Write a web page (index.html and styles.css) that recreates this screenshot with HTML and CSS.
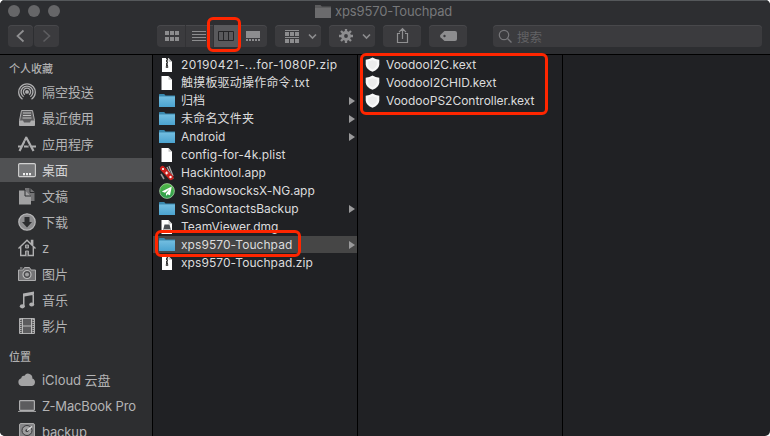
FILE: index.html
```html
<!DOCTYPE html>
<html lang="zh-CN">
<head>
<meta charset="utf-8">
<title>xps9570-Touchpad</title>
<link rel="stylesheet" href="styles.css">
</head>
<body>
<svg class="defs" width="0" height="0">
  <defs>
    <linearGradient id="blue" x1="0" y1="0" x2="0" y2="1"><stop offset="0" stop-color="#73bee0"/><stop offset="1" stop-color="#4ba3d0"/></linearGradient>
    <linearGradient id="green" x1="0" y1="0" x2="0" y2="1"><stop offset="0" stop-color="#52b947"/><stop offset="1" stop-color="#2a9b4d"/></linearGradient>
    <symbol id="folder" viewBox="0 0 16 16"><path d="M0 1.700Q0 1 .7 1h4.500l1.300 1.400H16V5H0z" fill="#3988ae"/><path d="M0 3.500h16V14H0z" fill="url(#blue)"/></symbol>
    <symbol id="doc" viewBox="0 0 16 16"><path d="M2.500 1h7L13 4.700V15H2.500z" fill="#fff"/><path d="M9.500 1v3.700H13z" fill="#c9c9c9"/></symbol>
    <symbol id="zip" viewBox="0 0 16 16"><path d="M3 1h6.500L13 4.700V15H3z" fill="#fff"/><path d="M9.500 1v3.700H13z" fill="#bbb"/><path d="M7 1h2v9H7z" fill="#333"/><path d="M7 2.500h1M8 4h1M7 5.500h1M8 7h1" stroke="#aaa"/><path d="M6.800 9h2.400v2H6.800z" fill="#555"/></symbol>
    <symbol id="shield" viewBox="0 0 16 16"><path d="M8.500 .5Q11.500 2.600 15.300 2.800v5Q14.800 12.300 8.500 14.800 2.200 12.300 1.700 7.800v-5Q5.500 2.600 8.500 .5z" fill="#f8f8f8"/><path d="M8.500 3Q10.500 4.300 12.800 4.500v3.300Q12.200 10.800 8.500 12.500 4.800 10.800 4.200 7.800V4.500Q6.500 4.300 8.500 3z" fill="#ececec"/></symbol>
  </defs>
</svg>
<div class="window">
  <header class="header">
    <div class="titlebar">
      <div class="lights"><i></i><i></i><i></i></div>
      <svg class="title-icon" width="16" height="14" viewBox="0 0 16 14"><path d="M0 1h5.500l1.300 1.500H16V14H0z" fill="#5b5b5d"/><path d="M0 4h16v10H0z" fill="#6b6b6d"/></svg>
      <span class="title">xps9570-Touchpad</span>
    </div>
    <div class="toolbar">
      <div class="btn back"><svg width="25" height="22" viewBox="0 0 25 22"><path d="M15.500 5.500 9.500 11l6 5.500" fill="none" stroke="#909092" stroke-width="1.700"/></svg></div>
      <div class="btn forward"><svg width="25" height="22" viewBox="0 0 25 22"><path d="m9.500 5.500 6 5.500-6 5.500" fill="none" stroke="#5d5d60" stroke-width="1.600"/></svg></div>
      <div class="btn views">
        <div class="seg"><svg width="28" height="22" viewBox="0 0 28 22" fill="#8d8d8f"><path d="M8 6h4v4H8zm5 0h4v4h-4zm5 0h4v4h-4zM8 12h4v4H8zm5 0h4v4h-4zm5 0h4v4h-4z"/></svg></div>
        <div class="seg"><svg width="28" height="22" viewBox="0 0 28 22"><path d="M7 6.500h14M7 9.500h14M7 12.500h14M7 15.500h14" stroke="#8d8d8f"/></svg></div>
        <div class="seg active"><svg width="26" height="22" viewBox="0 0 26 22"><path d="M5.500 6.500h15v9h-15zM10.500 6.500v9M15.500 6.500v9" fill="none" stroke="#242427"/></svg></div>
        <div class="seg"><svg width="28" height="22" viewBox="0 0 28 22" fill="#8d8d8f"><path d="M7 6h14v7H7zM7 14h2v2H7zm3 0h2v2h-2zm3 0h2v2h-2zm3 0h2v2h-2zm3 0h2v2h-2z"/></svg></div>
      </div>
      <div class="btn group"><svg width="46" height="22" viewBox="0 0 46 22" fill="#8d8d8f"><path d="M10 5h14v1H10zM10 7h4v4h-4zm5 0h4v4h-4zm5 0h4v4h-4zM10 12h14v1H10zM10 14h4v4h-4zm5 0h4v4h-4zm5 0h4v4h-4z"/><path d="m34 9.500 3.500 3.500L41 9.500" fill="none" stroke="#8d8d8f" stroke-width="1.600"/></svg></div>
      <div class="btn gear"><svg width="46" height="22" viewBox="0 0 46 22"><g stroke="#8d8d8f" fill="none"><path d="M17 4v3M17 15v3M10 11h3M21 11h3M12 6l2.200 2.200M19.800 13.800 22 16M12 16l2.200-2.200M19.800 8.200 22 6" stroke-width="2.300"/><circle cx="17" cy="11" r="3.400" stroke-width="3"/><path d="m34 9.500 3.500 3.500L41 9.500" stroke-width="1.600"/></g></svg></div>
      <div class="btn share"><svg width="38" height="22" viewBox="0 0 38 22"><path d="M17 8.500h-2.500v9h10v-9H22M19.500 14V4M16 7.200l3.500-3.500L23 7.200" fill="none" stroke="#909092" stroke-width="1.200"/></svg></div>
      <div class="btn tag"><svg width="38" height="22" viewBox="0 0 38 22"><path d="M15.500 6H26q2 0 2 2v6q0 2-2 2H15.500l-4-3.800q-1-1.200 0-2.400z" fill="#8d8d8f"/><circle cx="15.500" cy="11" r="1.200" fill="#3b3b3e"/></svg></div>
      <div class="btn search"><svg width="15" height="15" viewBox="0 0 15 15"><circle cx="6" cy="6" r="4.700" fill="none" stroke="#77777a" stroke-width="1.200"/><path d="m9.500 9.500 4 4" stroke="#77777a" stroke-width="1.300"/></svg><span>搜索</span></div>
    </div>
  </header>
  <div class="body">
    <aside class="sidebar">
      <h2>个人收藏</h2>
      <ul>
        <li><svg width="18" height="18" viewBox="0 0 18 18" fill="none" stroke="#adadae" stroke-width="1.300"><path d="M4.500 16.200a8.300 8.300 0 1 1 9 0M5.600 13.800a5.900 5.900 0 1 1 6.800 0M6.900 11.700a3.600 3.600 0 1 1 4.200 0"/><circle cx="9" cy="9" r="1.300" fill="#adadae"/><path d="m9 10-3 7h6z" fill="#2d2e30" stroke="none"/></svg><span>隔空投送</span></li>
        <li><svg width="18" height="18" viewBox="0 0 18 18"><path d="M3.500 1.500h11l2 10v5h-15v-5z" fill="#5c5c5e" stroke="#adadae"/><path d="M5 4h8M5 6.500h8M4.500 9h9" stroke="#c0c0c0" stroke-width="1.100"/><path d="M1.500 11.500H5l1 2h6l1-2h3.500v5h-15z" fill="#adadae"/></svg><span>最近使用</span></li>
        <li><svg width="18" height="18" viewBox="0 0 18 18" fill="none" stroke="#adadae"><path d="m8.500 2-7 14M8 2l7.500 14" stroke-width="2.200"/><path d="M0 11.500h3.500M6 11.500h5M14 11.500h4" stroke-width="1.800"/><path d="m7 5.500 4.500 8" stroke="#2d2e30" stroke-width=".6"/></svg><span>应用程序</span></li>
        <li class="selected"><svg width="18" height="18" viewBox="0 0 18 18"><rect x=".6" y="2.600" width="16.800" height="13" rx="1.200" fill="#77787a" stroke="#d0d0d0" stroke-width="1.100"/><path d="M5 12h2v2.300H5zm3 0h2v2.300H8zm3 0h2v2.300h-2z" fill="#eee"/></svg><span>桌面</span></li>
        <li><svg width="18" height="18" viewBox="0 0 18 18"><path d="M7 1h5l4.500 4v9H12V8L7 5z" fill="#747476"/><path d="M1 3.500h6L13 9v8.500H1z" fill="#a1a1a2"/><path d="M7 3v6h6M12 .8v4.700h4.700" fill="none" stroke="#2d2e30"/></svg><span>文稿</span></li>
        <li><svg width="18" height="18" viewBox="0 0 18 18"><circle cx="9" cy="9" r="8.200" fill="#8d8d8f" stroke="#b5b5b6" stroke-width="1.300"/><path d="M6.500 4h5v5H14l-5 5.500L4 9h2.500z" fill="#2d2e30"/></svg><span>下载</span></li>
        <li><svg width="18" height="18" viewBox="0 0 18 18"><path d="M2.700 8v8.500h12.600V8M.5 9.500 9 1.200l8.500 8.300M13.500 5V1.500h1.200V6" fill="none" stroke="#b0b0b1" stroke-width="1.400"/><path d="M7.500 17v-5h3v5M7.500 6h3v3h-3z" fill="#747476" stroke="#b0b0b1" stroke-width=".9"/></svg><span class="latin">z</span></li>
        <li><svg width="18" height="18" viewBox="0 0 18 18"><path d="M.5 5H5l1.500-2.500h5L13 5h4.500v10.500H.5z" fill="#747476" stroke="#adadae"/><path d="M2 3h2.500" stroke="#adadae"/><circle cx="9" cy="9.500" r="4" fill="#4a4a4d" stroke="#bcbcbc" stroke-width="1.200"/><circle cx="9" cy="9.500" r="2" fill="#a0a0a1"/></svg><span>图片</span></li>
        <li><svg width="18" height="18" viewBox="0 0 18 18" fill="#b0b0b1"><path d="M5 2.500 16 .5v3.200L6.500 5.500v10H5zM14.500 2H16v11.500h-1.500z"/><ellipse cx="4.300" cy="15.300" rx="2.500" ry="2.100"/><ellipse cx="13.700" cy="13.500" rx="2.500" ry="2.100"/></svg><span>音乐</span></li>
        <li><svg width="18" height="18" viewBox="0 0 18 18"><path d="M1.500 1.500h15v15h-15z" fill="#5c5c5e" stroke="#adadae"/><path d="M4.500 1v16M13.500 1v16M4.500 9h9" stroke="#bbb"/><path d="M2.800 2v14.500M15.200 2v14.500" stroke="#bbb" stroke-width="1.400" stroke-dasharray="1 1"/></svg><span>影片</span></li>
      </ul>
      <h2 class="places">位置</h2>
      <ul>
        <li><svg width="18" height="18" viewBox="0 0 18 18"><path d="M4 15a4 4 0 0 1-.8-7.800A2.700 2.700 0 0 1 6.500 4.800 4.200 4.200 0 0 1 14.300 7.500 3.900 3.900 0 0 1 14 15z" fill="#a3a3a4"/></svg><span>iCloud 云盘</span></li>
        <li><svg width="18" height="18" viewBox="0 0 18 18"><rect x="1.600" y="3.600" width="14.800" height="9.800" rx=".8" fill="#5c5c5e" stroke="#adadae" stroke-width="1.200"/><path d="M0 14h18v.8H0z" fill="#c0c0c0"/></svg><span class="latin">Z-MacBook Pro</span></li>
        <li><svg width="18" height="18" viewBox="0 0 18 18"><rect x="1.500" y="0.500" width="15" height="17" rx="1.500" fill="#858587" stroke="#aaa"/><circle cx="9" cy="7.500" r="5" fill="#9d9d9e" stroke="#3a3a3c"/><circle cx="9" cy="7.500" r="1.600" fill="#3a3a3c"/><path d="m9 7.500 5-4" stroke="#ddd" stroke-width="1.300"/></svg><span class="latin">backup</span></li>
      </ul>
    </aside>
    <section class="column first">
      <div class="file"><svg><use href="#zip"/></svg><span class="digits">20190421-...for-1080P.zip</span></div>
      <div class="file"><svg><use href="#doc"/></svg><span class="loose">触摸板驱动操作命令.txt</span></div>
      <div class="file dir"><svg><use href="#folder"/></svg><span>归档</span></div>
      <div class="file dir"><svg><use href="#folder"/></svg><span class="loose">未命名文件夹</span></div>
      <div class="file dir"><svg><use href="#folder"/></svg><span>Android</span></div>
      <div class="file"><svg><use href="#doc"/></svg><span class="loose slight">config-for-4k.plist</span></div>
      <div class="file"><svg viewBox="0 0 16 16"><path d="m8 2 6 12M10 1l4 10" stroke="#aaa" stroke-width="1.300"/><path d="m3.500 3.500 8.500 9" stroke="#c91f1b" stroke-width="5" stroke-linecap="round"/><circle cx="4" cy="4" r="1.100" fill="#fff"/><circle cx="11.500" cy="12" r="1.200" fill="#fff"/><path d="M7.700 6.500v3M6.200 8h3" stroke="#fff"/><path d="m2 9 3 5" stroke="#999" stroke-width="1.500"/></svg><span>Hackintool.app</span></div>
      <div class="file"><svg viewBox="0 0 16 16"><circle cx="8" cy="8" r="7.400" fill="url(#green)" stroke="#b9ddb1" stroke-width=".7"/><path d="m12.800 3.500-10 4.900 3.200 1.300 4.500-3.800-3.500 4.500v2.700l1.500-1.900 2.500 1z" fill="#fff"/></svg><span class="tight">ShadowsocksX-NG.app</span></div>
      <div class="file dir"><svg><use href="#folder"/></svg><span>SmsContactsBackup</span></div>
      <div class="file"><svg viewBox="0 0 16 16"><use href="#doc"/><path d="m5.500 5.500-1 4V12h7V9.500l-1-4z" fill="#4b4f54"/><path d="M5 10h6v1.500H5z" fill="#bbb"/></svg><span>TeamViewer.dmg</span></div>
      <div class="file dir current"><svg><use href="#folder"/></svg><span class="slight">xps9570-Touchpad</span></div>
      <div class="file"><svg><use href="#zip"/></svg><span class="slight">xps9570-Touchpad.zip</span></div>
    </section>
    <section class="column second">
      <div class="file"><svg><use href="#shield"/></svg><span>VoodooI2C.kext</span></div>
      <div class="file"><svg><use href="#shield"/></svg><span>VoodooI2CHID.kext</span></div>
      <div class="file"><svg><use href="#shield"/></svg><span>VoodooPS2Controller.kext</span></div>
    </section>
    <section class="column third"></section>
  </div>
</div>
<div class="mark mark-view"></div>
<div class="mark mark-kext"></div>
<div class="mark mark-folder"></div>
</body>
</html>
```
FILE: styles.css
```css
* { box-sizing: border-box; }
body { margin: 0; background: #fff; width: 770px; height: 436px; overflow: hidden; position: relative; font-family: Inter, "Noto Sans CJK SC", sans-serif; font-size: 12px; }
svg { display: block; flex: none; }
.defs { position: absolute; }
.window { width: 770px; height: 436px; border-radius: 5px; overflow: hidden; background: #202124; display: flex; flex-direction: column; }
.header { height: 55px; flex: none; background: #2d2e31; border-top: 1px solid #55585b; border-bottom: 1px solid #000; }
.titlebar { height: 24px; display: flex; align-items: center; padding-left: 8px; }
.lights { display: flex; gap: 8px; width: 307px; margin-top: -4px; }
.lights i { width: 12px; height: 12px; border-radius: 50%; background: #666668; }
.title-icon { margin-top: -4px; }
.title { margin: -4px 0 0 4px; color: #77787a; font-size: 13px; letter-spacing: -0.15px; white-space: nowrap; }
.toolbar { display: flex; height: 22px; padding: 0 8px; }
.btn { height: 22px; flex: none; background: #3b3b3e; border-radius: 4px; box-shadow: inset 0 1px #48484b; overflow: hidden; }
.back, .forward { width: 25px; }
.forward { margin-left: 1px; }
.views { display: flex; width: 110px; margin-left: 98px; }
.seg + .seg { box-shadow: inset 1px 0 #323235; }
.seg.active { background: #59595c; }
.group { width: 46px; margin-left: 8px; }
.gear { width: 46px; margin-left: 8px; }
.share, .tag { width: 38px; margin-left: 8px; }
.search { width: 269px; margin-left: 26px; display: flex; align-items: center; padding-left: 5px; gap: 4px; color: #626265; font-size: 12.5px; }
.body { flex: 1; display: flex; min-height: 0; }
.sidebar { width: 153px; flex: none; background: #2d2e30; border-right: 1px solid #000; overflow: hidden; }
.sidebar h2 { margin: 0; height: 24px; padding: 5px 0 0 9px; font-size: 11px; font-weight: 500; line-height: 18px; color: #b0b0b1; }
.sidebar h2.places { height: 28px; padding-top: 9px; }
.sidebar ul { list-style: none; margin: 0; padding: 0; display: grid; grid-auto-rows: 26px; }
.sidebar li { display: flex; align-items: center; height: 24px; margin-top: 1px; padding-left: 18px; gap: 6px; color: #b4b4b5; font-size: 13px; white-space: nowrap; }
.sidebar li span { padding-bottom: 2px; letter-spacing: -0.05px; }
.sidebar li .latin { padding: 0; letter-spacing: -0.15px; }
.sidebar li.selected { background: #505153; color: #d5d5d6; }
.column { width: 205px; flex: none; padding-top: 1px; border-right: 1px solid #000; }
.column.third { width: auto; flex: 1; border: 0; }
.file { display: flex; align-items: center; height: 18px; padding-left: 6px; color: #dcdcdd; letter-spacing: -0.01px; white-space: nowrap; line-height: 18px; }
.file svg { width: 16px; height: 16px; margin-right: 6px; }
.digits { letter-spacing: 0.4px; }
.loose { letter-spacing: 0.2px; }
.slight { letter-spacing: 0.06px; }
.tight { letter-spacing: -0.08px; }
.dir::after { content: ""; margin-left: auto; margin-right: 2px; border-left: 6px solid #9a9a9b; border-top: 4px solid transparent; border-bottom: 4px solid transparent; }
.current { background: linear-gradient(#464646 17px, transparent 17px); }
.mark { position: absolute; border: 3px solid #ff2600; border-radius: 6px; }
.mark-view { left: 207px; top: 17px; width: 34px; height: 35px; }
.mark-kext { left: 360px; top: 53px; width: 188px; height: 62px; }
.mark-folder { left: 155px; top: 230px; width: 146px; height: 27px; }
```
